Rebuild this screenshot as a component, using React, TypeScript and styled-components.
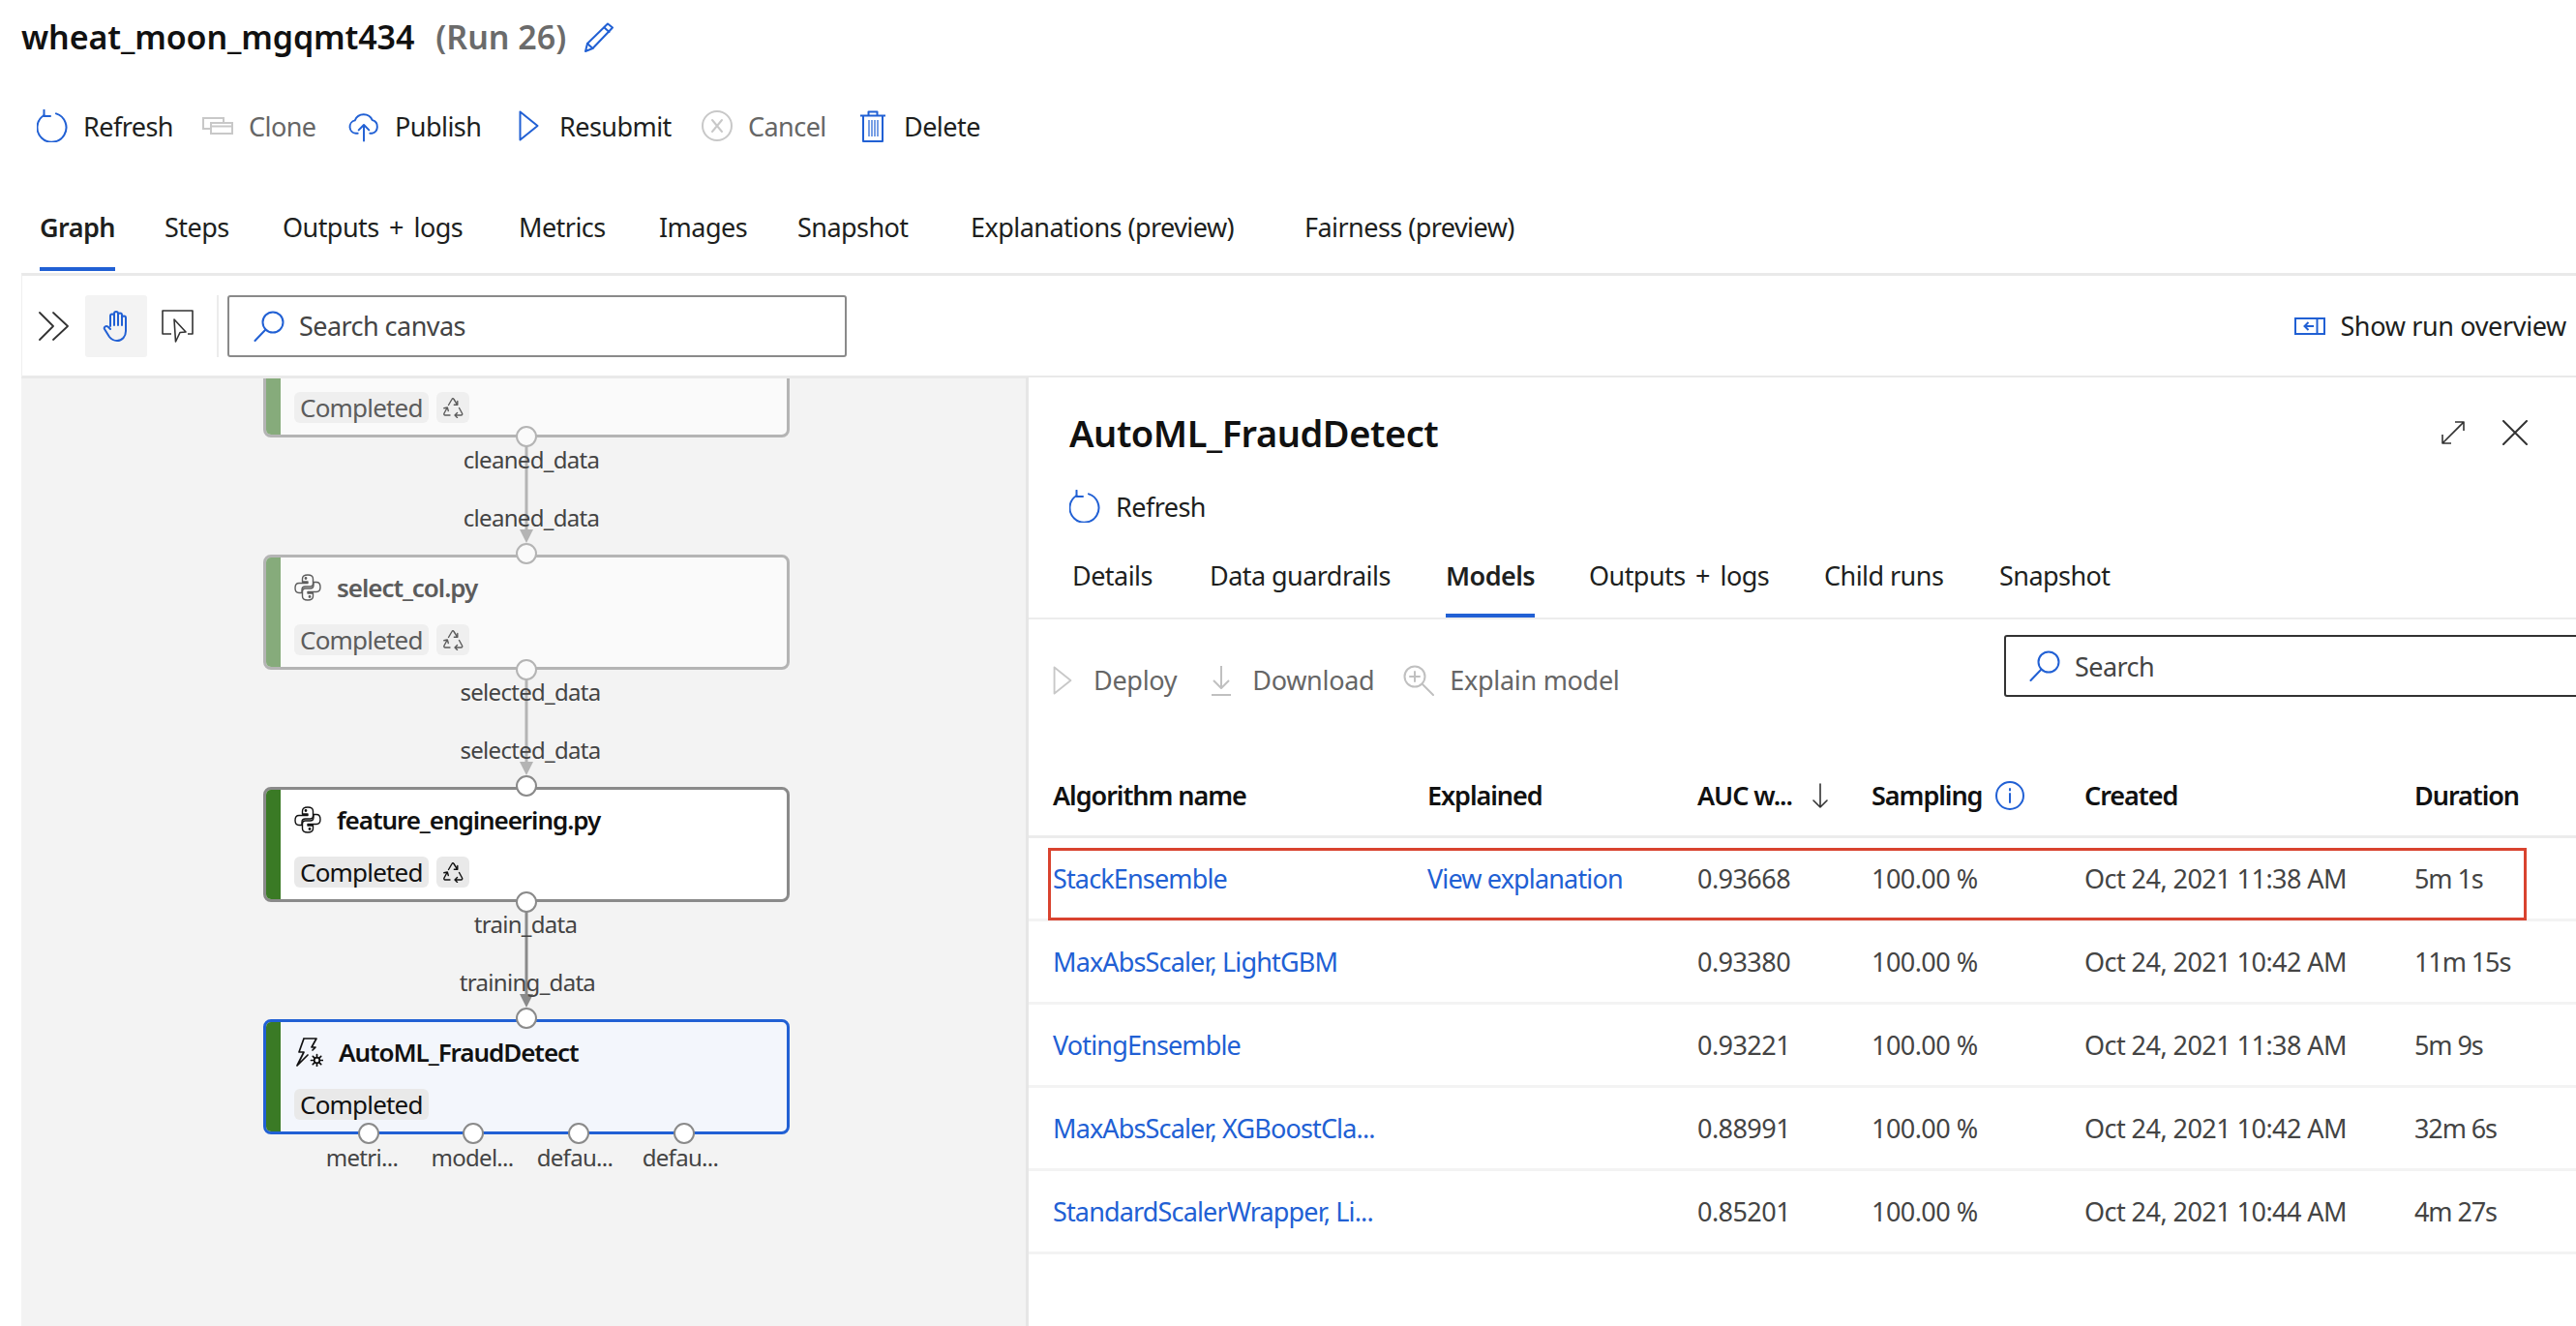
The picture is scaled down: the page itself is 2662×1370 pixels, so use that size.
import React from "react";
import styled, { createGlobalStyle } from "styled-components";

const BLUE = "#2160d4";
const FONT = `"Noto Sans", "Open Sans", sans-serif`;

const Global = createGlobalStyle`
  html, body { margin: 0; padding: 0; background: #fff; }
  body { font-family: ${FONT}; color: #201f1e; overflow: hidden; }
  * { box-sizing: border-box; }
`;

const Page = styled.div`
  width: 2662px;
  height: 1370px;
  display: flex;
  flex-direction: column;
  overflow: hidden;
  font-size: 27px;
  letter-spacing: -0.55px;
`;

const TitleRow = styled.div`
  height: 76px;
  padding-left: 22px;
  display: flex;
  align-items: center;
  font-size: 34px;
`;
const TitleName = styled.span`
  font-weight: 600;
  color: #111;
  letter-spacing: -0.12px;
`;
const TitleRun = styled.span`
  font-weight: 600;
  color: #6b6b6b;
  margin-left: 22px;
  letter-spacing: 0;
`;
const PencilWrap = styled.span`
  display: flex;
  margin-left: 18px;
`;

const ActionBar = styled.div<{ $h: number; $pl: number }>`
  height: ${(p) => p.$h}px;
  padding-left: ${(p) => p.$pl}px;
  display: flex;
  align-items: center;
`;
const Action = styled.div<{ $disabled?: boolean; $w?: number }>`
  display: flex;
  align-items: center;
  gap: 16px;
  color: ${(p) => (p.$disabled ? "#666" : "#201f1e")};
  ${(p) => (p.$w ? `width: ${p.$w}px;` : "")}
  white-space: nowrap;
`;
const IconBox = styled.span`
  width: 32px;
  height: 34px;
  flex: none;
  display: flex;
  align-items: center;
  justify-content: center;
`;

const Tabs = styled.div<{ $h: number; $pl: number; $mt?: number; $border?: boolean }>`
  height: ${(p) => p.$h}px;
  margin-top: ${(p) => p.$mt ?? 0}px;
  padding-left: ${(p) => p.$pl}px;
  display: flex;
  align-items: stretch;
  ${(p) => (p.$border ? "border-bottom: 2px solid #ececec;" : "")}
`;
const Tab = styled.div<{ $w: number }>`
  width: ${(p) => p.$w}px;
  flex: none;
  display: flex;
  align-items: center;
  white-space: nowrap;
`;
const TabLabel = styled.span<{ $active?: boolean; $pt: number; $pb: number; $wide?: boolean }>`
  align-self: stretch;
  display: flex;
  align-items: center;
  font-weight: ${(p) => (p.$active ? 600 : 400)};
  padding: ${(p) => p.$pt}px 0 ${(p) => p.$pb}px;
  word-spacing: ${(p) => (p.$wide ? 4 : 0)}px;
  border-bottom: 4px solid ${(p) => (p.$active ? BLUE : "transparent")};
`;

const CanvasBar = styled.div`
  margin: 2px 0 0 22px;
  height: 109px;
  border-top: 3px solid #e9e9e9;
  border-bottom: 3px solid #e9e9e9;
  border-left: 1px solid #efefef;
  display: flex;
  align-items: center;
  padding-left: 17px;
`;
const BarIcon = styled.div<{ $active?: boolean; $w: number; $start?: boolean }>`
  width: ${(p) => p.$w}px;
  height: 64px;
  display: flex;
  align-items: center;
  justify-content: ${(p) => (p.$start ? "flex-start" : "center")};
  border-radius: 3px;
  background: ${(p) => (p.$active ? "#f3f3f3" : "transparent")};
`;
const BarDivider = styled.div`
  width: 2px;
  height: 64px;
  background: #ececec;
  margin: 0 9px;
`;
const SearchBox = styled.div<{ $color: string; $w: number; $h: number; $pl: number }>`
  width: ${(p) => p.$w}px;
  height: ${(p) => p.$h}px;
  flex: none;
  border: 2px solid ${(p) => p.$color};
  border-radius: 3px;
  display: flex;
  align-items: center;
  gap: 15px;
  padding-left: ${(p) => p.$pl}px;
  color: #444;
  white-space: nowrap;
`;
const Overview = styled.div`
  margin-left: auto;
  padding-right: 10px;
  display: flex;
  align-items: center;
  gap: 15px;
  white-space: nowrap;
  color: #201f1e;
  letter-spacing: -0.35px;
`;

const Split = styled.div`
  flex: 1;
  min-height: 0;
  margin-left: 22px;
  display: flex;
`;

const GraphCanvas = styled.div`
  width: 1038px;
  flex: none;
  background: #f3f3f3;
  position: relative;
  overflow: hidden;
`;
const Edges = styled.svg`
  position: absolute;
  inset: 0;
  width: 100%;
  height: 100%;
`;
const Node = styled.div<{ $top: number; $kind: "faded" | "done" | "selected" }>`
  position: absolute;
  left: 250px;
  top: ${(p) => p.$top}px;
  width: 544px;
  height: 119px;
  border: 3px solid
    ${(p) => (p.$kind === "faded" ? "#b4b4b4" : p.$kind === "done" ? "#8a8a8a" : BLUE)};
  border-radius: 8px;
  background: ${(p) => (p.$kind === "faded" ? "#fafafa" : p.$kind === "done" ? "#fff" : "#f3f6fc")};
  display: flex;
  color: ${(p) => (p.$kind === "faded" ? "#5c5c5c" : "#111")};
`;
const Stripe = styled.div<{ $faded?: boolean }>`
  width: 15px;
  flex: none;
  border-radius: 5px 0 0 5px;
  background: ${(p) => (p.$faded ? "#86ab7b" : "#3a7a25")};
`;
const NodeBody = styled.div`
  flex: 1;
  padding: 13px 0 0 14px;
  display: flex;
  flex-direction: column;
  gap: 20px;
`;
const NodeHead = styled.div`
  height: 36px;
  display: flex;
  align-items: center;
  gap: 16px;
  font-size: 26px;
  font-weight: 600;
  letter-spacing: -1.05px;
  white-space: nowrap;
`;
const BadgeRow = styled.div`
  display: flex;
  gap: 8px;
`;
const Badge = styled.div<{ $faded?: boolean }>`
  height: 32px;
  padding: 0 6px;
  min-width: 32px;
  border-radius: 6px;
  background: ${(p) => (p.$faded ? "#efefef" : "#e9e9e9")};
  display: flex;
  align-items: center;
  justify-content: center;
  font-size: 26px;
  letter-spacing: -0.8px;
  white-space: nowrap;
`;
const Port = styled.div<{ $x: number; $y: number; $faded?: boolean }>`
  position: absolute;
  left: ${(p) => p.$x - 11}px;
  top: ${(p) => p.$y - 11}px;
  width: 22px;
  height: 22px;
  border-radius: 50%;
  background: ${(p) => (p.$faded ? "#fafafa" : "#fff")};
  border: 2.5px solid ${(p) => (p.$faded ? "#b4b4b4" : "#8a8a8a")};
`;
const PortLabel = styled.div<{ $x: number; $y: number }>`
  position: absolute;
  left: ${(p) => p.$x}px;
  top: ${(p) => p.$y}px;
  transform: translate(-50%, -50%);
  font-size: 24px;
  letter-spacing: -0.7px;
  color: #444;
  white-space: nowrap;
`;

const Panel = styled.div`
  flex: 1;
  min-width: 0;
  background: #fff;
  border-left: 3px solid #e6e6e6;
  margin-top: -1px;
  position: relative;
`;
const PanelHead = styled.div`
  height: 114px;
  padding: 0 50px 0 42px;
  display: flex;
  align-items: center;
  justify-content: space-between;
`;
const PanelTitle = styled.div`
  font-size: 38px;
  font-weight: 600;
  letter-spacing: -0.45px;
  color: #111;
`;
const PanelTools = styled.div`
  display: flex;
  align-items: center;
  gap: 39px;
`;
const TableActions = styled.div`
  height: 140px;
  padding-left: 19px;
  display: flex;
  align-items: flex-start;
`;
const ActionGroup = styled.div`
  width: 989px;
  flex: none;
  display: flex;
  gap: 30px;
  margin-top: 44px;
  letter-spacing: -0.3px;
`;
const PanelSearchWrap = styled.div`
  margin-top: 16px;
  flex: none;
`;

const Row = styled.div<{ $head?: boolean }>`
  height: 86px;
  padding-left: 25px;
  display: grid;
  grid-template-columns: 387px 279px 180px 220px 341px 1fr;
  align-items: center;
  border-bottom: 3px solid ${(p) => (p.$head ? "#ececec" : "#f3f3f3")};
  color: ${(p) => (p.$head ? "#111" : "#444")};
  font-weight: ${(p) => (p.$head ? 600 : 400)};
  letter-spacing: ${(p) => (p.$head ? -1.05 : -0.55)}px;
  white-space: nowrap;
`;
const HeadCell = styled.div<{ $gap?: number }>`
  display: flex;
  align-items: center;
  gap: ${(p) => p.$gap ?? 0}px;
`;
const LinkCell = styled.div`
  color: ${BLUE};
  letter-spacing: -0.85px;
`;
const DurationCell = styled.div`
  letter-spacing: -1.1px;
`;
const Highlight = styled.div`
  position: absolute;
  left: 20px;
  top: 486px;
  width: 1528px;
  height: 75px;
  border: 3px solid #d9432f;
  pointer-events: none;
`;

const stroke = (c: string, w = 1.6) => ({
  fill: "none",
  stroke: c,
  strokeWidth: w,
  strokeLinecap: "round" as const,
  strokeLinejoin: "round" as const,
});

const RefreshIcon = () => (
  <svg width="32" height="34" viewBox="0 0 32 34" {...stroke(BLUE, 2)}>
    <path d="M20 4.4A15 15 0 1 1 7.5 6" />
    <path d="M7.5 0.8V7H14" />
  </svg>
);
const CloneIcon = () => (
  <svg width="32" height="18" viewBox="0 0 32 18" {...stroke("#c8c8c8", 2)} strokeLinecap="butt" strokeLinejoin="miter">
    <path d="M9 12H1V1h21v5" />
    <rect x="9" y="6" width="22" height="11" />
    <path d="M9 9.500h22" />
  </svg>
);
const PublishIcon = () => (
  <svg width="33" height="34" viewBox="0 0 33 34" {...stroke(BLUE, 2)}>
    <path d="M10 25H8a7 7 0 0 1-1-13.8A10 10 0 0 1 25.500 11a7.200 7.200 0 0 1-.5 14h-2" />
    <path d="M16.500 33V16M11 21.500l5.500-5.500 5.500 5.500" />
  </svg>
);
const PlayIcon = ({ c, w = 21, h = 32 }: { c: string; w?: number; h?: number }) => (
  <svg width={w} height={h} viewBox="0 0 21 32" {...stroke(c, 2)}>
    <path d="M1.500 1.500V30.500L19.500 16Z" />
  </svg>
);
const CancelIcon = () => (
  <svg width="32" height="34" viewBox="0 0 32 34" {...stroke("#c8c8c8", 2)}>
    <circle cx="16" cy="17" r="15" />
    <path d="M11 11l10 12M21 11L11 23" />
  </svg>
);
const TrashIcon = () => (
  <svg width="26" height="33" viewBox="0 0 26 33" {...stroke(BLUE, 2)} strokeLinecap="butt">
    <path d="M0 5.500h26M8.500 5V1.500h9V5M3 6v26h20V6" />
    <path d="M9 10v17M12 10v17M15 10v17M18 10v17" strokeWidth="1.2" />
  </svg>
);
const PencilIcon = () => (
  <svg width="32" height="32" viewBox="0 0 32 32" {...stroke(BLUE, 2)}>
    <path d="M25 2.500l5 4L9.500 28 2 31l2-8Z" />
    <path d="M21.500 6.500l5 4.500M4 23l5.500 5" />
  </svg>
);
const ChevronsIcon = () => (
  <svg width="32" height="32" viewBox="0 0 32 32" {...stroke("#333", 1.8)}>
    <path d="M1 2l14 14L1 30M15 2l15 14-15 14" />
  </svg>
);
const HandIcon = () => (
  <svg width="28" height="32" viewBox="0 0 28 32" {...stroke(BLUE, 2)}>
    <path d="M8 16V5.500a2 2 0 0 1 4 0V15M12 15V3a2 2 0 0 1 4 0v12M16 15V4.500a2 2 0 0 1 4 0V15M20 15V7.500a2 2 0 0 1 4 0V21c0 6-4 10-9 10-4 0-6-1.500-8-4l-5-8c-1-2 1.500-4 3.500-2.500L8 19" />
  </svg>
);
const CursorIcon = () => (
  <svg width="33" height="34" viewBox="0 0 33 34" {...stroke("#333", 1.6)} strokeLinecap="butt">
    <path d="M10 25H1V1h31v24h-5" />
    <path d="M13 10l12 13-6 .5L14.500 33Z" />
  </svg>
);
const SearchIcon = () => (
  <svg width="32" height="32" viewBox="0 0 32 32" {...stroke(BLUE, 2)}>
    <circle cx="20" cy="12" r="10.500" />
    <path d="M12.500 19.500L1.500 31" />
  </svg>
);
const OverviewIcon = () => (
  <svg width="32" height="18" viewBox="0 0 32 18" {...stroke(BLUE, 2)} strokeLinecap="butt" strokeLinejoin="miter">
    <rect x="1" y="1" width="30" height="16" />
    <path d="M23.500 1v16M20 9H10.500M14.500 5l-4 4 4 4" />
  </svg>
);
const PY_HALF =
  "M14 1c-4 0-5.500 1.500-5.500 4v3H14v1.500H5C2.500 9.500 1 11.500 1 14.500s1.500 5 4 5h3v-3c0-2 1.500-3.500 3.500-3.500h5c2 0 3-1.200 3-3V5c0-2.500-1.500-4-5.500-4Z";
const PythonIcon = ({ c }: { c: string }) => (
  <svg width="28" height="28" viewBox="0 0 28 28" {...stroke(c, 1.4)}>
    <path d={PY_HALF} />
    <path d={PY_HALF} transform="rotate(180 14 14)" />
    <circle cx="12" cy="4.500" r=".7" />
    <circle cx="16" cy="23.500" r=".7" />
  </svg>
);
const RecycleIcon = ({ c }: { c: string }) => (
  <svg width="22" height="22" viewBox="0 0 22 22" {...stroke(c, 1.4)}>
    <path d="M6.500 8.500L10 2.500c.5-1 1.500-1 2 0l3.500 5.500M15.800 4.500V8.200H12.300" />
    <path d="M17.500 11.500l3 5.500c.5 1 0 2-1 2H13M15.500 16.500L13 19l2.500 2.500" />
    <path d="M8 19H3c-1 0-1.500-1-1-2l3-5.500M1.800 11.700l3.500-.7 1 3.500" />
  </svg>
);
const AutoMLIcon = () => (
  <svg width="30" height="30" viewBox="0 0 30 30" {...stroke("#111", 1.7)}>
    <path d="M10 1H23L18 10H22L19 13M10 1L5 15H10L3 29L14 18" />
    <circle cx="23.500" cy="23.500" r="2.800" />
    <path d="M23.500 17.500v3M23.500 26.500v3M17.500 23.500h3M26.500 23.500h3M19.300 19.300l2 2M25.700 25.700l2 2M27.700 19.300l-2 2M21.300 25.700l-2 2" />
  </svg>
);
const ExpandIcon = () => (
  <svg width="24" height="24" viewBox="0 0 24 24" {...stroke("#333", 1.6)} strokeLinecap="butt">
    <path d="M23 1L1 23M14 1h9v9M1 14v9h9" />
  </svg>
);
const CloseIcon = () => (
  <svg width="26" height="26" viewBox="0 0 26 26" {...stroke("#333", 2)}>
    <path d="M1 1l24 24M25 1L1 25" />
  </svg>
);
const DownloadIcon = () => (
  <svg width="20" height="32" viewBox="0 0 20 32" {...stroke("#c0c0c0", 2)} strokeLinecap="butt">
    <path d="M10 1v23M2 16l8 8 8-8M0 31h20" />
  </svg>
);
const ExplainIcon = () => (
  <svg width="32" height="32" viewBox="0 0 32 32" {...stroke("#c0c0c0", 2)}>
    <circle cx="12" cy="12" r="10.500" />
    <path d="M12 7v10M7 12h10M19.500 19.500L31 31" />
  </svg>
);
const SortIcon = () => (
  <svg width="16" height="26" viewBox="0 0 16 26" {...stroke("#333", 1.6)}>
    <path d="M8 1v24M1 18l7 7 7-7" />
  </svg>
);
const InfoIcon = () => (
  <svg width="30" height="30" viewBox="0 0 30 30" {...stroke(BLUE, 2)}>
    <circle cx="15" cy="15" r="14" />
    <path d="M15 13v9M15 8v1.500" />
  </svg>
);

const modelRows = [
  ["StackEnsemble", "View explanation", "0.93668", "100.00 %", "Oct 24, 2021 11:38 AM", "5m 1s"],
  ["MaxAbsScaler, LightGBM", "", "0.93380", "100.00 %", "Oct 24, 2021 10:42 AM", "11m 15s"],
  ["VotingEnsemble", "", "0.93221", "100.00 %", "Oct 24, 2021 11:38 AM", "5m 9s"],
  ["MaxAbsScaler, XGBoostCla...", "", "0.88991", "100.00 %", "Oct 24, 2021 10:42 AM", "32m 6s"],
  ["StandardScalerWrapper, Li...", "", "0.85201", "100.00 %", "Oct 24, 2021 10:44 AM", "4m 27s"],
];

const mainTabs: [string, number][] = [
  ["Graph", 129], ["Steps", 122], ["Outputs + logs", 244], ["Metrics", 145],
  ["Images", 143], ["Snapshot", 179], ["Explanations (preview)", 345], ["Fairness (preview)", 240],
];
const panelTabs: [string, number][] = [
  ["Details", 142], ["Data guardrails", 244], ["Models", 148], ["Outputs + logs", 243],
  ["Child runs", 181], ["Snapshot", 130],
];

const nodes = [
  { top: -58, kind: "faded" as const, name: "", py: true },
  { top: 182, kind: "faded" as const, name: "select_col.py", py: true },
  { top: 422, kind: "done" as const, name: "feature_engineering.py", py: true },
  { top: 662, kind: "selected" as const, name: "AutoML_FraudDetect", py: false },
];
const labels: [string, number, number][] = [
  ["cleaned_data", 527, 83], ["cleaned_data", 527, 143],
  ["selected_data", 526, 323], ["selected_data", 526, 383],
  ["train_data", 521, 563], ["training_data", 523, 623],
  ["metri...", 352, 804], ["model...", 466, 804], ["defau...", 572, 804], ["defau...", 681, 804],
];
const ports: [number, number, boolean][] = [
  [522, 60, true], [522, 181, true], [522, 301, true], [522, 421, false],
  [522, 541, false], [522, 661, false],
  [359, 780, false], [467, 780, false], [576, 780, false], [685, 780, false],
];
const edges: [number, number, string][] = [
  [60, 181, "#b4b4b4"],
  [301, 421, "#b4b4b4"],
  [541, 661, "#8a8a8a"],
];

export default function App() {
  return (
    <Page>
      <Global />
      <TitleRow>
        <TitleName>wheat_moon_mgqmt434</TitleName>
        <TitleRun>(Run 26)</TitleRun>
        <PencilWrap><PencilIcon /></PencilWrap>
      </TitleRow>

      <ActionBar $h={108} $pl={38}>
        <Action $w={171}><IconBox><RefreshIcon /></IconBox>Refresh</Action>
        <Action $w={151} $disabled><IconBox><CloneIcon /></IconBox>Clone</Action>
        <Action $w={170}><IconBox><PublishIcon /></IconBox>Publish</Action>
        <Action $w={195}><IconBox><PlayIcon c={BLUE} /></IconBox>Resubmit</Action>
        <Action $w={161} $disabled><IconBox><CancelIcon /></IconBox>Cancel</Action>
        <Action><IconBox><TrashIcon /></IconBox>Delete</Action>
      </ActionBar>

      <Tabs $h={86} $pl={41} $mt={10}>
        {mainTabs.map(([t, w], i) => (
          <Tab key={t} $w={w}>
            <TabLabel $active={i === 0} $pt={0} $pb={1} $wide={t.includes("+")}>{t}</TabLabel>
          </Tab>
        ))}
      </Tabs>

      <CanvasBar>
        <BarIcon $w={48} $start><ChevronsIcon /></BarIcon>
        <BarIcon $w={64} $active><HandIcon /></BarIcon>
        <BarIcon $w={63}><CursorIcon /></BarIcon>
        <BarDivider />
        <SearchBox $color="#8a8a8a" $w={640} $h={64} $pl={25}>
          <SearchIcon />
          Search canvas
        </SearchBox>
        <Overview><OverviewIcon />Show run overview</Overview>
      </CanvasBar>

      <Split>
        <GraphCanvas>
          <Edges viewBox="0 0 1038 979">
            {edges.map(([a, b, c]) => (
              <g key={a}>
                <path d={`M522 ${a}V${b - 18}`} stroke={c} strokeWidth="3" fill="none" />
                <path d={`M515 ${b - 25}h14l-7 14Z`} fill={c} />
              </g>
            ))}
          </Edges>
          {nodes.map((n) => {
            const faded = n.kind === "faded";
            const c = faded ? "#5c5c5c" : "#111";
            return (
              <Node key={n.top} $top={n.top} $kind={n.kind}>
                <Stripe $faded={faded} />
                <NodeBody>
                  <NodeHead>
                    {n.py ? <PythonIcon c={c} /> : <AutoMLIcon />}
                    {n.name}
                  </NodeHead>
                  <BadgeRow>
                    <Badge $faded={faded}>Completed</Badge>
                    {n.py && <Badge $faded={faded}><RecycleIcon c={c} /></Badge>}
                  </BadgeRow>
                </NodeBody>
              </Node>
            );
          })}
          {ports.map(([x, y, f]) => <Port key={`${x}-${y}`} $x={x} $y={y} $faded={f} />)}
          {labels.map(([t, x, y]) => <PortLabel key={`${t}-${x}-${y}`} $x={x} $y={y}>{t}</PortLabel>)}
        </GraphCanvas>

        <Panel>
          <PanelHead>
            <PanelTitle>AutoML_FraudDetect</PanelTitle>
            <PanelTools><ExpandIcon /><CloseIcon /></PanelTools>
          </PanelHead>
          <ActionBar $h={38} $pl={42}>
            <Action><IconBox><RefreshIcon /></IconBox>Refresh</Action>
          </ActionBar>
          <Tabs $h={98} $pl={45} $border>
            {panelTabs.map(([t, w], i) => (
              <Tab key={t} $w={w}>
                <TabLabel $active={i === 2} $pt={12} $pb={0} $wide={t.includes("+")}>{t}</TabLabel>
              </Tab>
            ))}
          </Tabs>
          <TableActions>
            <ActionGroup>
              <Action $disabled><IconBox><PlayIcon c="#c8c8c8" w={20} h={30} /></IconBox>Deploy</Action>
              <Action $disabled><IconBox><DownloadIcon /></IconBox>Download</Action>
              <Action $disabled><IconBox><ExplainIcon /></IconBox>Explain model</Action>
            </ActionGroup>
            <PanelSearchWrap>
              <SearchBox $color="#333" $w={720} $h={64} $pl={24}>
                <SearchIcon />
                Search
              </SearchBox>
            </PanelSearchWrap>
          </TableActions>
          <Row $head>
            <HeadCell>Algorithm name</HeadCell>
            <HeadCell>Explained</HeadCell>
            <HeadCell $gap={21}>AUC w...<SortIcon /></HeadCell>
            <HeadCell $gap={14}>Sampling<InfoIcon /></HeadCell>
            <HeadCell>Created</HeadCell>
            <HeadCell>Duration</HeadCell>
          </Row>
          {modelRows.map((r) => (
            <Row key={r[0]}>
              <LinkCell>{r[0]}</LinkCell>
              <LinkCell>{r[1]}</LinkCell>
              <div>{r[2]}</div>
              <div>{r[3]}</div>
              <div>{r[4]}</div>
              <DurationCell>{r[5]}</DurationCell>
            </Row>
          ))}
          <Highlight />
        </Panel>
      </Split>
    </Page>
  );
}
